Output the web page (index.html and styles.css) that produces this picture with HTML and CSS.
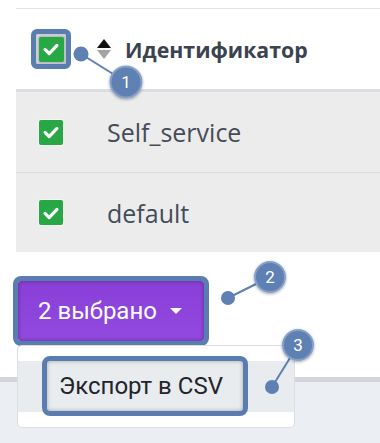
FILE: index.html
```html
<!DOCTYPE html>
<html lang="ru">
<head>
<meta charset="utf-8">
<title>Идентификатор</title>
<link rel="stylesheet" href="styles.css">
</head>
<body>
<div class="page">
  <div class="table">
    <div class="thead">
      <div class="cell-check">
        <span class="hl-check"><span class="cb cb-head"><svg viewBox="0 0 24 24" class="tick"><path d="M5.5 12.5l4.5 4.5 8.5-9"/></svg></span></span>
      </div>
      <div class="th">
        <svg class="sort" viewBox="0 0 14 20"><path class="up" d="M7 0L14 9H0z"/><path class="down" d="M0 11h14L7 20z"/></svg>
        <span class="th-label">Идентификатор</span>
      </div>
    </div>
    <div class="row">
      <div class="cell-check"><span class="cb"><svg viewBox="0 0 24 24" class="tick"><path d="M5.5 12.5l4.5 4.5 8.5-9"/></svg></span></div>
      <div class="td">Self_service</div>
    </div>
    <div class="row">
      <div class="cell-check"><span class="cb"><svg viewBox="0 0 24 24" class="tick"><path d="M5.5 12.5l4.5 4.5 8.5-9"/></svg></span></div>
      <div class="td">default</div>
    </div>
  </div>
  <div class="actions">
    <div class="dropdown">
      <button class="btn">2 выбрано<span class="caret"></span></button>
      <div class="menu">
        <div class="item"><span class="item-label">Экспорт в CSV</span></div>
      </div>
    </div>
  </div>
  <div class="footer"></div>
  <svg class="notes" viewBox="0 0 380 443" width="380" height="443">
    <defs>
      <filter id="sh" x="-50%" y="-50%" width="200%" height="200%">
        <feDropShadow dx="0" dy="1" stdDeviation="1.5" flood-color="#000" flood-opacity="0.35"/>
      </filter>
    </defs>
    <g class="lines">
      <line x1="81" y1="54" x2="126" y2="82"/>
      <line x1="228" y1="298" x2="270" y2="277"/>
      <line x1="272" y1="387" x2="298" y2="345"/>
    </g>
    <g class="dots">
      <circle cx="81" cy="54" r="7.5"/>
      <circle cx="228" cy="298" r="7"/>
      <circle cx="272" cy="387" r="7"/>
    </g>
    <g class="badges" filter="url(#sh)">
      <circle cx="126" cy="82" r="15.5"/>
      <circle cx="270" cy="277" r="15"/>
      <circle cx="298" cy="345" r="15"/>
    </g>
    <g class="nums">
      <text x="126" y="88">1</text>
      <text x="270" y="283">2</text>
      <text x="298" y="351">3</text>
    </g>
  </svg>
</div>
</body>
</html>
```
FILE: styles.css
```css
html, body {
  margin: 0;
  padding: 0;
  background: #fff;
}
body {
  font-family: Roboto, "Liberation Sans", sans-serif;
  overflow: hidden;
}
.page {
  position: relative;
  width: 380px;
  height: 443px;
  overflow: hidden;
  display: flex;
  flex-direction: column;
}
.table {
  margin: 8px 0 0 16px;
  border-top: 1px solid #dfe1e5;
}
.thead {
  display: flex;
  align-items: center;
  height: 80px;
  border-bottom: 3px solid #dcdde2;
  background: #fff;
}
.row {
  display: flex;
  align-items: center;
  height: 80px;
  background: #ececec;
}
.row + .row {
  border-top: 1px solid #dcdde3;
  height: 79px;
}
.cell-check {
  width: 70px;
  display: flex;
  justify-content: center;
  align-items: center;
}
.cb {
  width: 24px;
  height: 25px;
  background: #28a745;
  border-radius: 2px;
  box-shadow: 0 0 0 1px #f6f6f6;
  display: flex;
  align-items: center;
  justify-content: center;
}
.cb-head {
  width: 25px;
  height: 25px;
  box-shadow: 0 0 0 1.5px #b9bcc1;
}
.tick {
  width: 22px;
  height: 22px;
}
.tick path {
  fill: none;
  stroke: #fff;
  stroke-width: 3.4;
  stroke-linecap: round;
  stroke-linejoin: round;
}
.hl-check {
  width: 30px;
  height: 30px;
  border: 5px solid #5a7db1;
  border-radius: 6px;
  display: flex;
  align-items: center;
  justify-content: center;
  background: #e9eaec;
  box-shadow: inset 0 0 3px rgba(0,0,0,0.35);
}
.th {
  display: flex;
  align-items: center;
  padding-left: 11px;
}
.sort {
  width: 14px;
  height: 20px;
  margin-right: 14px;
}
.sort .up { fill: #111; }
.sort .down { fill: #a3a3a3; }
.th-label {
  font-family: "Open Sans", Roboto, sans-serif;
  font-weight: 700;
  font-size: 21.3px;
  color: #3c4350;
}
.td {
  padding-left: 21px;
  font-family: "Open Sans", Roboto, sans-serif;
  font-size: 25px;
  color: #444c58;
}
.actions {
  margin: 29px 0 0 18px;
}
.dropdown {
  position: relative;
  width: 186px;
}
.btn {
  display: flex;
  align-items: center;
  width: 186px;
  height: 60px;
  padding: 0 0 0 20px;
  border: none;
  border-radius: 3px;
  background: linear-gradient(#8a40d8, #9149df);
  color: #fff;
  font-family: Roboto, sans-serif;
  font-size: 24px;
  outline: 5px solid #5a7db1;
  box-shadow: inset 0 0 4px rgba(0,0,0,0.35);
}
.caret {
  width: 0;
  height: 0;
  margin-left: 13px;
  border-left: 6.5px solid transparent;
  border-right: 6.5px solid transparent;
  border-top: 6px solid #fff;
}
.menu {
  position: absolute;
  left: -1px;
  top: 64px;
  width: 276px;
  padding: 15px 0;
  background: #fff;
  border: 1px solid #dcdee2;
  border-radius: 5px;
  z-index: 2;
}
.item {
  height: 51px;
  background: #e9ecef;
  padding-left: 29px;
}
.item-label {
  display: inline-block;
  height: 50px;
  line-height: 50px;
  padding: 0 15px 0 12px;
  width: 169px;
  font-size: 24px;
  color: #212529;
  outline: 5px solid #5a7db1;
  border-radius: 3px;
  box-shadow: inset 0 0 4px rgba(0,0,0,0.3);
}
.footer {
  margin-top: 36px;
  border-top: 5px solid #d2d5da;
  background: #ebeef2;
  flex: 1;
}
.notes {
  position: absolute;
  left: 0;
  top: 0;
  z-index: 3;
  pointer-events: none;
}
.lines line {
  stroke: #5d7fb3;
  stroke-width: 2;
}
.dots circle {
  fill: #5f80b3;
}
.badges circle {
  fill: #5f80b3;
  stroke: #86a1c9;
  stroke-width: 2;
}
.nums text {
  fill: #fff;
  font-family: Roboto, sans-serif;
  font-size: 17px;
  text-anchor: middle;
}
```
